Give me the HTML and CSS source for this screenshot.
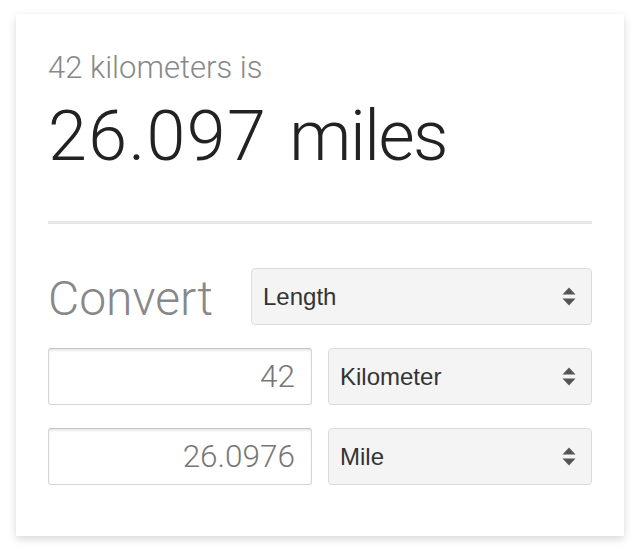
FILE: index.html
```html
<!DOCTYPE html>
<html lang="en">
<head>
<meta charset="utf-8">
<title>Unit converter</title>
<link rel="stylesheet" href="styles.css">
</head>
<body>
<div class="card">
  <div class="lead">42 kilometers is</div>
  <div class="result"><span class="result-num">26.097</span> <span class="result-unit">miles</span></div>
  <div class="divider"></div>
  <div class="convert-row">
    <div class="convert-label">Convert</div>
    <div class="select select-wide">
      <span class="select-text">Length</span>
      <svg class="arrows" width="14" height="19" viewBox="0 0 14 19"><polygon points="0.5,7.5 7,0.5 13.5,7.5"/><polygon points="0.5,11.5 13.5,11.5 7,18.5"/></svg>
    </div>
  </div>
  <div class="unit-grid">
    <input class="value" type="text" value="42">
    <div class="select">
      <span class="select-text">Kilometer</span>
      <svg class="arrows" width="14" height="19" viewBox="0 0 14 19"><polygon points="0.5,7.5 7,0.5 13.5,7.5"/><polygon points="0.5,11.5 13.5,11.5 7,18.5"/></svg>
    </div>
    <input class="value" type="text" value="26.0976">
    <div class="select">
      <span class="select-text">Mile</span>
      <svg class="arrows" width="14" height="19" viewBox="0 0 14 19"><polygon points="0.5,7.5 7,0.5 13.5,7.5"/><polygon points="0.5,11.5 13.5,11.5 7,18.5"/></svg>
    </div>
  </div>
</div>
</body>
</html>
```
FILE: styles.css
```css
html, body {
  margin: 0;
  padding: 0;
  background: #ffffff;
}
body {
  font-family: Roboto, "Liberation Sans", Arial, sans-serif;
}
.card {
  box-sizing: border-box;
  width: 608px;
  height: 522px;
  margin: 14px 16px;
  padding: 34px 32px 51px;
  background: #ffffff;
  box-shadow: 0 3px 8px rgba(0, 0, 0, 0.16);
}
.lead {
  font-size: 31px;
  line-height: 40px;
  font-weight: 300;
  color: #888888;
}
.result {
  margin-top: 8px;
  font-size: 70px;
  line-height: 80px;
  font-weight: 300;
  color: #222222;
  word-spacing: 5px;
}
.result-num {
  letter-spacing: 1.4px;
}
.result-unit {
  letter-spacing: -1.5px;
}
.divider {
  margin-top: 45px;
  height: 3px;
  background: #e6e6e6;
}
.convert-row {
  margin-top: 44px;
  display: flex;
  align-items: flex-start;
}
.convert-label {
  flex: 1;
  height: 57px;
  padding-top: 4px;
  box-sizing: border-box;
  font-size: 48px;
  line-height: 53px;
  font-weight: 300;
  color: #888888;
}
.select {
  box-sizing: border-box;
  height: 57px;
  display: flex;
  align-items: center;
  justify-content: space-between;
  padding: 0 15px 0 11px;
  background: #f4f4f4;
  border: 1px solid #dcdcdc;
  border-radius: 4px;
}
.select-wide {
  width: 341px;
}
.select-text {
  font-family: "Liberation Sans", Arial, sans-serif;
  font-size: 24px;
  line-height: 55px;
  color: #333333;
}
.arrows {
  fill: #555555;
  display: block;
}
.unit-grid {
  margin-top: 23px;
  display: grid;
  grid-template-columns: 264px 264px;
  column-gap: 16px;
  row-gap: 23px;
}
.value {
  box-sizing: border-box;
  width: 264px;
  height: 57px;
  margin: 0;
  padding: 0 16px 0 10px;
  border: 1px solid #d6d6d6;
  border-top-color: #c4c4c4;
  border-radius: 3px;
  box-shadow: inset 0 2px 2px rgba(0, 0, 0, 0.09);
  background: #ffffff;
  font-family: Roboto, "Liberation Sans", Arial, sans-serif;
  font-size: 31.5px;
  font-weight: 300;
  color: #777777;
  text-align: right;
  outline: none;
}
```
